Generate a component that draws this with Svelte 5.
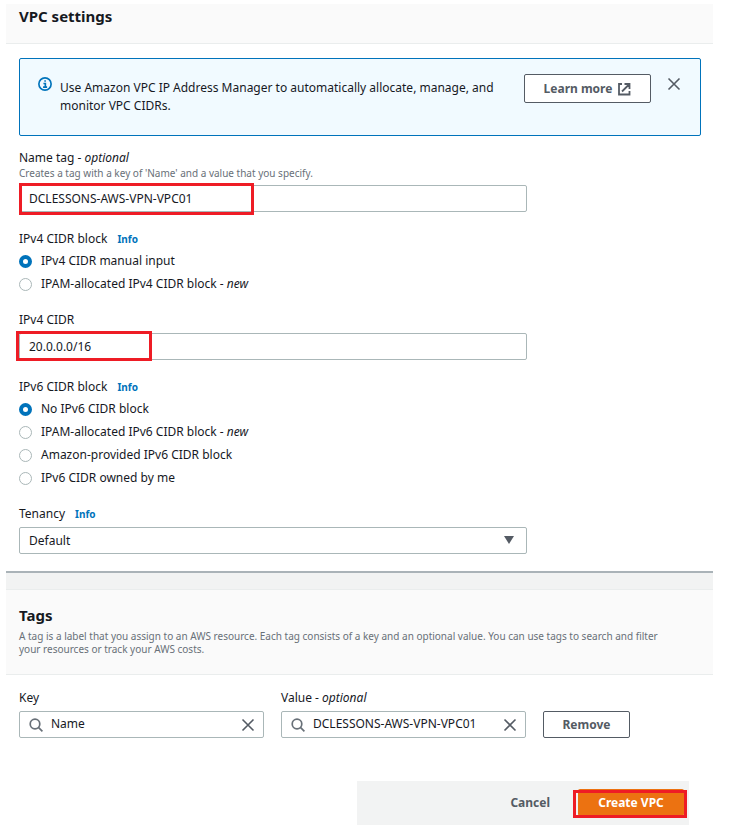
<script>
  let nameTag = 'DCLESSONS-AWS-VPN-VPC01';
  let ipv4Mode = 'manual';
  let ipv4Cidr = '20.0.0.0/16';
  let ipv6Mode = 'none';
  let tenancy = 'default';
  let tagKey = 'Name';
  let tagValue = 'DCLESSONS-AWS-VPN-VPC01';
  let showAlert = true;

  const ipv4Options = [
    { value: 'manual', label: 'IPv4 CIDR manual input' },
    { value: 'ipam', label: 'IPAM-allocated IPv4 CIDR block', isNew: true },
  ];
  const ipv6Options = [
    { value: 'none', label: 'No IPv6 CIDR block' },
    { value: 'ipam', label: 'IPAM-allocated IPv6 CIDR block', isNew: true },
    { value: 'amazon', label: 'Amazon-provided IPv6 CIDR block' },
    { value: 'owned', label: 'IPv6 CIDR owned by me' },
  ];
</script>

<main>
  <section class="panel">
    <header class="panel-header settings-header">
      <h2>VPC settings</h2>
    </header>
    <div class="panel-body">
      {#if showAlert}
        <div class="alert" role="status">
          <svg class="info-icon" viewBox="0 0 16 16" aria-hidden="true">
            <circle cx="8" cy="8" r="7" />
            <path d="M6.2 7.4h2.2v3.8M5.8 11.6h4.6M7.2 4.6h1.8" />
          </svg>
          <p>Use Amazon VPC IP Address Manager to automatically allocate, manage, and monitor VPC CIDRs.</p>
          <a class="btn learn" href="#learn">
            Learn more
            <svg class="external" viewBox="0 0 14 14" aria-hidden="true">
              <path d="M5 2H2v10.5h10.5V9M7.5 2h5v5M12 2.5L5 9.5" />
            </svg>
          </a>
          <button class="icon-btn dismiss" aria-label="Dismiss" on:click={() => (showAlert = false)}>
            <svg viewBox="0 0 14 14" aria-hidden="true"><path d="M1.5 1.5l11 11M12.5 1.5l-11 11" /></svg>
          </button>
        </div>
      {/if}

      <div class="field">
        <label for="name-tag">Name tag - <em>optional</em></label>
        <p class="hint">Creates a tag with a key of 'Name' and a value that you specify.</p>
        <div class="control">
          <input id="name-tag" type="text" bind:value={nameTag} />
          <span class="mark mark-name"></span>
        </div>
      </div>

      <fieldset>
        <legend>IPv4 CIDR block <a class="info" href="#ipv4-info">Info</a></legend>
        {#each ipv4Options as opt}
          <label class="radio">
            <input type="radio" name="ipv4" value={opt.value} bind:group={ipv4Mode} />
            <span>{opt.label}{#if opt.isNew}{' - '}<em>new</em>{/if}</span>
          </label>
        {/each}
      </fieldset>

      <div class="field">
        <label for="ipv4-cidr">IPv4 CIDR</label>
        <div class="control">
          <input id="ipv4-cidr" type="text" bind:value={ipv4Cidr} />
          <span class="mark mark-cidr"></span>
        </div>
      </div>

      <fieldset>
        <legend>IPv6 CIDR block <a class="info" href="#ipv6-info">Info</a></legend>
        {#each ipv6Options as opt}
          <label class="radio">
            <input type="radio" name="ipv6" value={opt.value} bind:group={ipv6Mode} />
            <span>{opt.label}{#if opt.isNew}{' - '}<em>new</em>{/if}</span>
          </label>
        {/each}
      </fieldset>

      <div class="field">
        <div class="label-row">
          <label for="tenancy">Tenancy</label>
          <a class="info" href="#tenancy-info">Info</a>
        </div>
        <div class="control">
          <select id="tenancy" bind:value={tenancy}>
            <option value="default">Default</option>
            <option value="dedicated">Dedicated</option>
          </select>
          <svg class="caret" viewBox="0 0 10 8" aria-hidden="true"><path d="M0 0h10L5 8z" /></svg>
        </div>
      </div>
    </div>
  </section>

  <section class="panel tags">
    <header class="panel-header tags-header">
      <h2>Tags</h2>
      <p class="hint">
        A tag is a label that you assign to an AWS resource. Each tag consists of a key and an optional value. You can use tags to search and filter your resources or track your AWS costs.
      </p>
    </header>
    <div class="tag-row">
      <div class="tag-field">
        <label for="tag-key">Key</label>
        <div class="search">
          <svg class="glass" viewBox="0 0 14 14" aria-hidden="true"><circle cx="6" cy="6" r="4.8" /><path d="M9.4 9.4L13.4 13.4" /></svg>
          <input id="tag-key" type="text" bind:value={tagKey} />
          <button class="icon-btn" aria-label="Clear key" on:click={() => (tagKey = '')}>
            <svg viewBox="0 0 14 14" aria-hidden="true"><path d="M1.5 1.5l11 11M12.5 1.5l-11 11" /></svg>
          </button>
        </div>
      </div>
      <div class="tag-field">
        <label for="tag-value">Value - <em>optional</em></label>
        <div class="search">
          <svg class="glass" viewBox="0 0 14 14" aria-hidden="true"><circle cx="6" cy="6" r="4.8" /><path d="M9.4 9.4L13.4 13.4" /></svg>
          <input id="tag-value" type="text" bind:value={tagValue} />
          <button class="icon-btn" aria-label="Clear value" on:click={() => (tagValue = '')}>
            <svg viewBox="0 0 14 14" aria-hidden="true"><path d="M1.5 1.5l11 11M12.5 1.5l-11 11" /></svg>
          </button>
        </div>
      </div>
      <button class="btn remove">Remove</button>
    </div>
  </section>

  <footer>
    <button class="cancel">Cancel</button>
    <div class="submit">
      <button class="create">Create VPC</button>
      <span class="mark mark-create"></span>
    </div>
  </footer>
</main>

<style>
  :global(body) { margin: 0; background: #fff; }
  main {
    padding: 4px 23px 8px 6px;
    font-family: "Noto Sans", "Open Sans", sans-serif;
    font-size: 12px;
    line-height: 18px;
    color: #16191f;
  }
  main * { box-sizing: border-box; }
  h2 { margin: 0; font-size: 15px; line-height: 24px; font-weight: 700; }
  p { margin: 0; }
  input, select, button { font: inherit; color: inherit; }
  label { display: block; }

  .panel-header {
    background: #fafafa;
    border-bottom: 1px solid #eaeded;
  }
  .settings-header { padding: 0 13px 15px; }
  .panel-body {
    padding: 14px 12px 17px 13px;
    border-bottom: 2px solid #aab3b8;
  }
  .hint {
    padding-bottom: 1px;
    font-size: 10px;
    line-height: 13px;
    color: #687078;
  }

  .alert {
    display: flex;
    align-items: flex-start;
    min-height: 78px;
    margin-bottom: 13px;
    padding: 15px 19px 15px 18px;
    background: #f1faff;
    border: 1px solid #0073bb;
    border-radius: 2px;
  }
  .alert p { flex: 1; padding: 5px 20px 0 8px; }
  .info-icon {
    width: 14px;
    height: 14px;
    margin-top: 3px;
    fill: none;
    stroke: #0073bb;
    stroke-width: 1.9;
  }
  .btn {
    display: inline-flex;
    align-items: center;
    justify-content: center;
    background: #fff;
    border: 1px solid #545b64;
    border-radius: 2px;
    color: #545b64;
    font-weight: 700;
    text-decoration: none;
    white-space: nowrap;
  }
  .learn { width: 127px; height: 29px; gap: 5px; }
  .external {
    width: 14px;
    height: 14px;
    fill: none;
    stroke: #545b64;
    stroke-width: 1.8;
  }
  .icon-btn {
    display: flex;
    padding: 0;
    border: 0;
    background: none;
  }
  .icon-btn svg {
    width: 14px;
    height: 14px;
    fill: none;
    stroke: #545b64;
    stroke-width: 1.6;
  }
  .dismiss { margin: 3px 0 0 16px; }

  .field, fieldset { max-width: 508px; }
  .control { position: relative; margin-top: 4px; }
  .control input, select {
    display: block;
    width: 100%;
    height: 27px;
    padding: 0 9px;
    background: #fff;
    border: 1px solid #aab7b8;
    border-radius: 2px;
  }
  select { appearance: none; }
  .caret {
    position: absolute;
    top: 9px;
    right: 13px;
    width: 10px;
    height: 8px;
    fill: #545b64;
    pointer-events: none;
  }

  fieldset { margin: 18px 0 16px; padding: 0; border: 0; }
  legend { padding: 0; margin-bottom: 2px; }
  .label-row { display: flex; }
  .info {
    margin-left: 7px;
    font-size: 10px;
    font-weight: 700;
    color: #0073bb;
    text-decoration: none;
  }
  .label-row .info { margin-left: 10px; }
  .radio { display: flex; align-items: center; height: 22px; }
  .radio + .radio { margin-top: 1px; }
  .radio input {
    appearance: none;
    width: 13px;
    height: 13px;
    margin: 0 9px 0 0;
    border: 1px solid #aab7b8;
    border-radius: 50%;
    background: #fff;
  }
  .radio input:checked { border: 4px solid #0073bb; }

  /* red highlight frames */
  .mark {
    position: absolute;
    border: 3px solid #ee1c25;
    pointer-events: none;
  }
  .mark-name { top: -2px; left: 0; width: 235px; height: 32px; }
  .mark-cidr { top: -2px; left: -3px; width: 136px; height: 30px; }
  .mark-create { inset: 1px -3px -2px -5px; }

  .tags { border-top: 16px solid #f2f3f3; }
  .tags-header {
    padding: 13px 13px 17px;
    border-top: 1px solid #eaeded;
  }
  .tags-header h2 { margin-bottom: 3px; }
  .tags-header .hint { padding-right: 24px; }
  .tag-row {
    display: flex;
    align-items: flex-end;
    gap: 17px;
    padding: 14px 13px 0;
  }
  .tag-field { flex: 0 1 245px; min-width: 0; }
  .search {
    display: flex;
    align-items: center;
    height: 27px;
    margin-top: 4px;
    padding: 0 8px 0 9px;
    border: 1px solid #aab7b8;
    border-radius: 2px;
  }
  .search input {
    flex: 1;
    min-width: 0;
    padding: 0 0 2px 8px;
    border: 0;
    background: none;
  }
  .glass {
    width: 14px;
    height: 14px;
    fill: none;
    stroke: #687078;
    stroke-width: 1.7;
  }
  .remove { width: 87px; height: 27px; padding: 0; }

  footer {
    display: flex;
    justify-content: flex-end;
    align-items: flex-start;
    gap: 28px;
    width: 47%;
    height: 44px;
    margin: 43px 24px 0 auto;
    padding: 8px 5px;
    background: #f2f3f3;
  }
  .cancel {
    height: 27px;
    padding: 0;
    border: 0;
    background: none;
    color: #545b64;
    font-weight: 700;
  }
  .submit { position: relative; }
  .create {
    display: block;
    width: 106px;
    height: 27px;
    padding: 0;
    border: 0;
    border-radius: 2px;
    background: #ec7211;
    color: #fff;
    font-weight: 700;
  }
</style>
